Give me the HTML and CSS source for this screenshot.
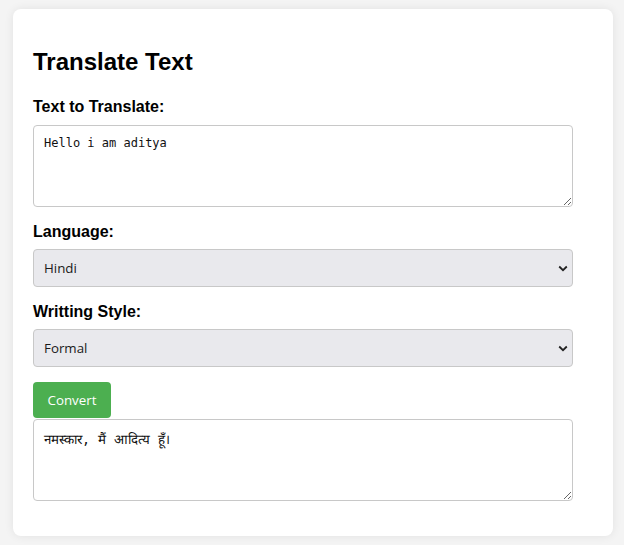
FILE: index.html
```html
<!DOCTYPE html>
<html lang="en">
<head>
<meta charset="utf-8">
<title>Translate Text</title>
<link rel="stylesheet" href="styles.css">
</head>
<body>
<div class="card">
  <h2 class="title">Translate Text</h2>
  <div class="field">
    <label class="label" for="src">Text to Translate:</label>
    <textarea id="src" class="box">Hello i am aditya</textarea>
  </div>
  <div class="field">
    <label class="label" for="lang">Language:</label>
    <select id="lang" class="select">
      <option>Hindi</option>
    </select>
  </div>
  <div class="field field-last">
    <label class="label" for="style">Writting Style:</label>
    <select id="style" class="select">
      <option>Formal</option>
    </select>
  </div>
  <button class="btn" type="button">Convert</button>
  <textarea class="box output">नमस्कार, मैं आदित्य हूँ।</textarea>
</div>
</body>
</html>
```
FILE: styles.css
```css
html, body {
  margin: 0;
  padding: 0;
}
body {
  background: #f4f4f4;
  font-family: "Liberation Sans", Arial, sans-serif;
  color: #000;
  height: 545px;
  overflow: hidden;
}
.card {
  width: 600px;
  box-sizing: border-box;
  margin: 9px 0 0 13px;
  padding: 20px 20px 35px 20px;
  background: #fff;
  border-radius: 8px;
  box-shadow: 0 0 10px rgba(0, 0, 0, 0.08);
}
.title {
  font-size: 24px;
  line-height: 28px;
  font-weight: bold;
  margin: 19px 0 22px 0;
}
.field {
  margin-bottom: 16px;
}
.field-last {
  margin-bottom: 15px;
}
.label {
  display: block;
  font-size: 16px;
  line-height: 18px;
  font-weight: bold;
  margin-bottom: 8px;
}
.field:first-of-type .label {
  margin-bottom: 9px;
}
.box {
  display: block;
  width: 540px;
  height: 82px;
  box-sizing: border-box;
  padding: 10px;
  margin: 0;
  border: 1px solid #c8c8c8;
  border-radius: 4px;
  font-family: "DejaVu Sans Mono", monospace;
  font-size: 12px;
  color: #111;
  background: #fff;
  resize: vertical;
}
.select {
  display: block;
  width: 540px;
  height: 38px;
  box-sizing: border-box;
  margin: 0;
  padding: 0 30px 0 10px;
  border: 1px solid #c8c8c8;
  border-radius: 4px;
  background-color: #e9e9ed;
  background-image: url("data:image/svg+xml,%3Csvg xmlns='http://www.w3.org/2000/svg' width='10' height='7' viewBox='0 0 10 7'%3E%3Cpath d='M1.2 1.5 L5 5.2 L8.8 1.5' fill='none' stroke='%23222' stroke-width='1.8'/%3E%3C/svg%3E");
  background-repeat: no-repeat;
  background-position: right 4px center;
  background-size: 10px 7px;
  -webkit-appearance: none;
  appearance: none;
  font-family: "Open Sans", "Noto Sans", sans-serif;
  font-size: 13.33px;
  color: #1a1a1a;
}
.btn {
  display: block;
  height: 36px;
  margin: 0 0 1px 0;
  padding: 0 14.5px;
  border: none;
  border-radius: 4px;
  background: #4caf50;
  color: #fff;
  font-family: "Open Sans", "Noto Sans", sans-serif;
  font-size: 13.33px;
}
.output {
  font-size: 13.33px;
}
```
